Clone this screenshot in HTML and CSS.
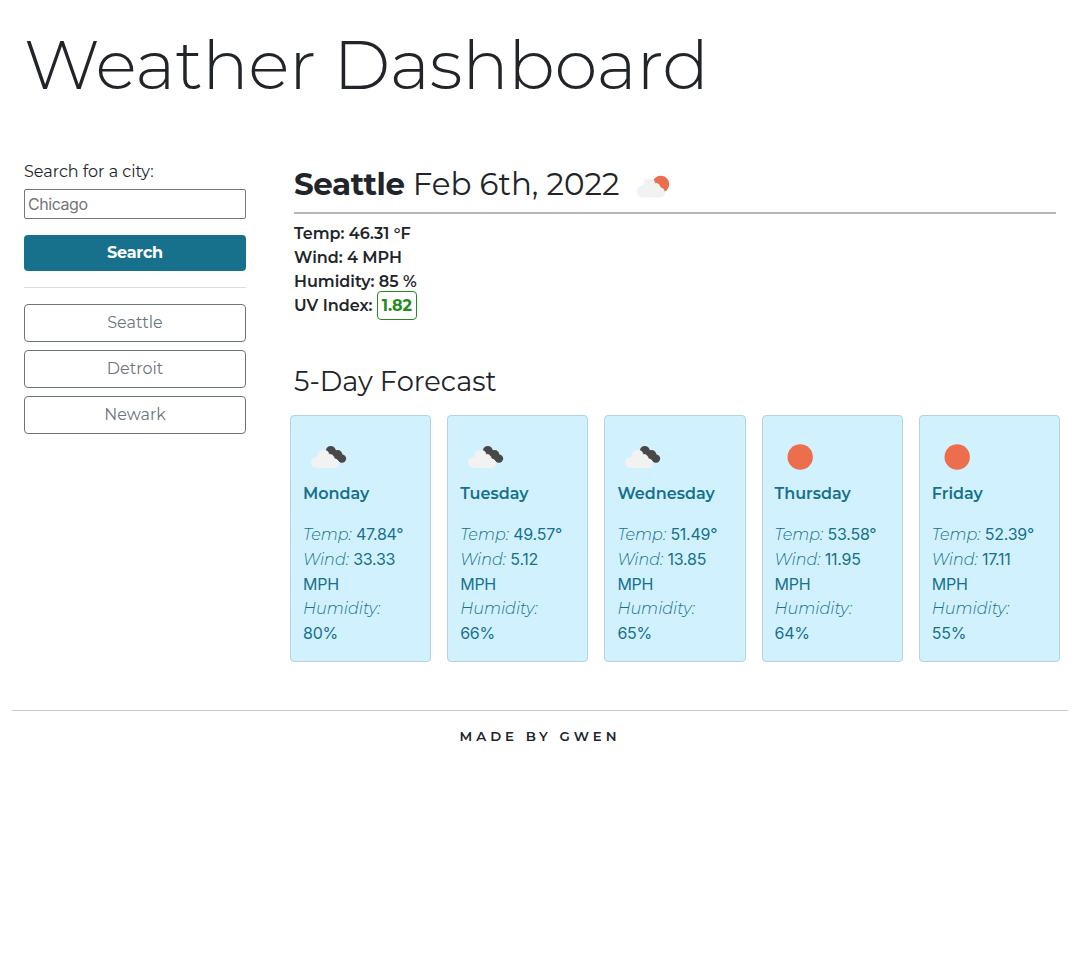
FILE: index.html
```html
<!DOCTYPE html>
<html lang="en">
<head>
<meta charset="utf-8">
<title>Weather Dashboard</title>
<link rel="stylesheet" href="styles.css">
</head>
<body>
<svg class="defs" width="0" height="0">
  <symbol id="cloud" viewBox="0 0 50 50">
    <path d="M13.5 36a5.5 5.5 0 0 1 0-11q.6 0 1-.2a6.3 6.3 0 0 1 10-5.6q1.4 1.2 1.6 3.2a4.4 4.4 0 0 1 5.2 4.2a5 5 0 0 1 1.7 9.4z"/>
  </symbol>
  <symbol id="broken" viewBox="0 0 50 50">
    <g fill="#484848"><circle cx="27.8" cy="19" r="5"/><circle cx="34.6" cy="22.8" r="4.8"/><circle cx="39" cy="26.6" r="4.2"/><path d="M30 16l9 8-1 6.6-13-9z"/></g>
    <use class="cloud-gap" href="#cloud"/><use class="cloud" href="#cloud"/>
  </symbol>
  <symbol id="few" viewBox="0 0 50 50">
    <circle cx="31.8" cy="23.2" r="8.4" fill="#ec6e4c"/>
    <use class="cloud-gap" href="#cloud"/><use class="cloud" href="#cloud"/>
  </symbol>
  <symbol id="sun" viewBox="0 0 50 50"><circle cx="25.2" cy="25" r="12.7" fill="#ec6e4c"/></symbol>
</svg>
<header class="header"><h1 class="title">Weather Dashboard</h1></header>
<div class="layout">
  <aside class="sidebar">
    <label class="label" for="city"><span>Search for a city:</span></label>
    <input class="input" id="city" placeholder="Chicago">
    <button class="search">Search</button>
    <hr class="divider">
    <div class="history">
      <button class="city">Seattle</button>
      <button class="city">Detroit</button>
      <button class="city">Newark</button>
    </div>
  </aside>
  <main class="main">
    <section class="current">
      <div class="heading"><h2 class="place"><b>Seattle</b> <span>Feb 6th, 2022</span></h2><svg class="icon on-white"><use href="#few"/></svg></div>
      <p class="stat">Temp: 46.31 °F</p>
      <p class="stat">Wind: 4 MPH</p>
      <p class="stat">Humidity: 85 %</p>
      <p class="stat">UV Index: <span class="badge">1.82</span></p>
    </section>
    <h3 class="subtitle">5-Day Forecast</h3>
    <div class="cards">
      <article class="card"><svg class="icon"><use href="#broken"/></svg><h4 class="day">Monday</h4><p class="details"><i>Temp:</i> 47.84°<br><i>Wind:</i> 33.33<br>MPH<br><i>Humidity:</i><br>80%</p></article>
      <article class="card"><svg class="icon"><use href="#broken"/></svg><h4 class="day">Tuesday</h4><p class="details"><i>Temp:</i> 49.57°<br><i>Wind:</i> 5.12<br>MPH<br><i>Humidity:</i><br>66%</p></article>
      <article class="card"><svg class="icon"><use href="#broken"/></svg><h4 class="day">Wednesday</h4><p class="details"><i>Temp:</i> 51.49°<br><i>Wind:</i> 13.85<br>MPH<br><i>Humidity:</i><br>65%</p></article>
      <article class="card"><svg class="icon"><use href="#sun"/></svg><h4 class="day">Thursday</h4><p class="details"><i>Temp:</i> 53.58°<br><i>Wind:</i> 11.95<br>MPH<br><i>Humidity:</i><br>64%</p></article>
      <article class="card"><svg class="icon"><use href="#sun"/></svg><h4 class="day">Friday</h4><p class="details"><i>Temp:</i> 52.39°<br><i>Wind:</i> 17.11<br>MPH<br><i>Humidity:</i><br>55%</p></article>
    </div>
  </main>
</div>
<footer class="footer">MADE BY GWEN</footer>
</body>
</html>
```
FILE: styles.css
```css
* { box-sizing: border-box; }
body { margin: 0; background: #fff; color: #212529; font: 400 16px/24px Montserrat, Inter, sans-serif; }
h1, h2, h3, h4, p { margin: 0; }
.defs { display: block; height: 0; }
.header { height: 159px; padding: 23px 24px 0; }
.title { font-size: 69px; line-height: 82px; font-weight: 300; white-space: nowrap; letter-spacing: -.4px; }
.layout { display: flex; padding: 0 20px 0 24px; gap: 44px; height: 551px; }
.sidebar { width: 222px; flex: none; }
.label { display: block; padding-top: 1px; margin-bottom: 5px; }
.input { display: block; width: 222px; height: 30px; padding: 1px 3px; border: 1px solid #767676; border-radius: 2px; font: 16px Inter, sans-serif; letter-spacing: -.45px; }
.input::placeholder { color: #757575; }
.search { display: block; width: 100%; height: 36px; margin: 16px 0; border: 0; border-radius: 4px; background: #17718c; color: #fff; font: 700 16px/24px Montserrat, Inter, sans-serif; letter-spacing: -.2px; }
.divider { border: 0; height: 1px; margin: 16px 0; background: #dedede; }
.history { display: flex; flex-direction: column; gap: 8px; }
.city { height: 38px; border: 1px solid #6c757d; border-radius: 4px; background: #fff; color: #6c757d; font: 400 16px/24px Montserrat, Inter, sans-serif; }
.main { flex: 1; }
.current { margin: 0 4px; }
.heading { display: flex; height: 55px; border-bottom: 2px solid #b8b8b8; margin-bottom: 8px; }
.place { font-size: 30.92px; line-height: 50px; font-weight: 400; white-space: nowrap; width: 335px; }
.place b { letter-spacing: -.35px; }
.icon { display: block; width: 50px; height: 50px; flex: none; }
.heading .icon { margin-top: 2px; }
.cloud { fill: #f2f2f2; }
.cloud-gap { fill: none; stroke: #d2f1ff; stroke-width: .6; }
.on-white .cloud-gap { stroke: #fff; }
.stat { font-weight: 600; white-space: nowrap; }
.badge { display: inline-block; height: 29px; padding: 1px 4px; line-height: 26px; margin: -3px 0; border: 1px solid #228b22; border-radius: 4px; color: #228b22; font-weight: 700; letter-spacing: -.2px; }
.subtitle { font-size: 27.28px; line-height: 34px; font-weight: 400; margin: 47px 4px 16px; }
.cards { display: grid; grid-template-columns: repeat(5, 1fr); gap: 16px; }
.card { height: 247px; padding: 16px 12px; background: #d2f1ff; border: 1px solid #b3d4df; border-radius: 4px; color: #17718c; }
.day { font-size: 16px; line-height: 24px; font-weight: 600; margin-bottom: 16px; }
.details { font: 400 16px/24.75px Inter, sans-serif; white-space: nowrap; letter-spacing: -.25px; }
.details i { font-family: Montserrat, Inter, sans-serif; font-weight: 300; font-size: 16px; line-height: 0; letter-spacing: 0; }
.footer { margin: 0 12px; border-top: 1px solid #c8c8c8; padding-top: 13px; text-align: center; font-size: 13.3px; font-weight: 600; letter-spacing: 4px; }
```
